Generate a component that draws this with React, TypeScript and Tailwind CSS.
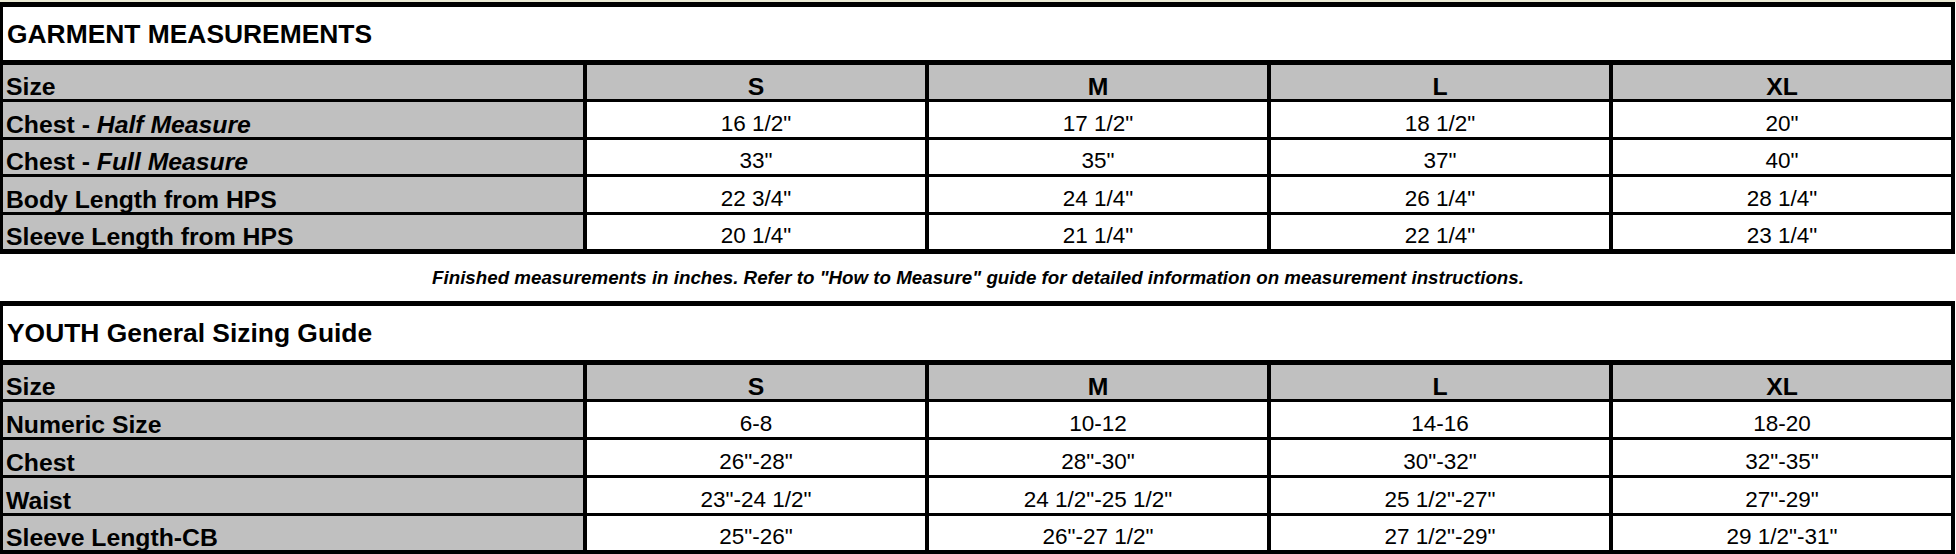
import React from 'react';

// --- DATA ---
type Row = { label: React.ReactNode; values: string[] };

const SIZES = ['S', 'M', 'L', 'XL'];

const GARMENT_ROWS: Row[] = [
  { label: <>Chest - <i>Half Measure</i></>, values: ['16 1/2"', '17 1/2"', '18 1/2"', '20"'] },
  { label: <>Chest - <i>Full Measure</i></>, values: ['33"', '35"', '37"', '40"'] },
  { label: 'Body Length from HPS', values: ['22 3/4"', '24 1/4"', '26 1/4"', '28 1/4"'] },
  { label: 'Sleeve Length from HPS', values: ['20 1/4"', '21 1/4"', '22 1/4"', '23 1/4"'] },
];

const YOUTH_ROWS: Row[] = [
  { label: 'Numeric Size', values: ['6-8', '10-12', '14-16', '18-20'] },
  { label: 'Chest', values: ['26"-28"', '28"-30"', '30"-32"', '32"-35"'] },
  { label: 'Waist', values: ['23"-24 1/2"', '24 1/2"-25 1/2"', '25 1/2"-27"', '27"-29"'] },
  { label: 'Sleeve Length-CB', values: ['25"-26"', '26"-27 1/2"', '27 1/2"-29"', '29 1/2"-31"'] },
];

// --- TABLE ---
const SizeTable = ({
  title,
  rows,
  titleClass,
  gridRows,
  bottomClass,
}: {
  title: string;
  rows: Row[];
  titleClass: string;
  gridRows: string;
  bottomClass: string;
}) => (
  <div className={`w-[1955px] border-black border-t-[5px] border-l-[3px] border-r-[4px] ${bottomClass}`}>
    <div className={`flex items-center pl-[4px] text-[26.4px] leading-[28px] font-bold bg-white border-b-[5px] border-black ${titleClass}`}>
      {title}
    </div>
    <div className={`grid grid-cols-[580px_repeat(4,338px)] gap-x-[4px] gap-y-[3px] bg-black ${gridRows}`}>
      <div className="bg-[#c0c0c0] flex items-end pl-[3px] text-[24.75px] leading-[24px] font-bold">
        <span>Size</span>
      </div>
      {SIZES.map((s) => (
        <div key={s} className="bg-[#c0c0c0] flex items-end justify-center text-[24.75px] leading-[24px] font-bold">
          <span>{s}</span>
        </div>
      ))}
      {rows.map((row, i) => (
        <React.Fragment key={i}>
          <div className="bg-[#c0c0c0] flex items-end pl-[3px] text-[24.75px] leading-[24px] font-bold whitespace-nowrap">
            <span>{row.label}</span>
          </div>
          {row.values.map((v, j) => (
            <div key={j} className="bg-white flex items-end justify-center pb-[2px] text-[22.5px] leading-[23px]">
              <span>{v}</span>
            </div>
          ))}
        </React.Fragment>
      ))}
    </div>
  </div>
);

const App = () => (
  <div className="w-[1956px] h-[554px] bg-white text-black overflow-hidden font-['Liberation_Sans',Arial,sans-serif]">
    <div className="h-[2px] bg-[#ebebd5]" />
    <SizeTable
      title="GARMENT MEASUREMENTS"
      rows={GARMENT_ROWS}
      titleClass="h-[58px]"
      gridRows="grid-rows-[34px_35px_34px_35px_34px]"
      bottomClass="border-b-[5px]"
    />
    <div className="h-[47px] flex items-center justify-center pt-[2px] text-[18.75px] italic font-bold">
      Finished measurements in inches. Refer to "How to Measure" guide for detailed information on measurement instructions.
    </div>
    <SizeTable
      title="YOUTH General Sizing Guide"
      rows={YOUTH_ROWS}
      titleClass="h-[59px]"
      gridRows="grid-rows-[34px_35px_35px_35px_34px]"
      bottomClass="border-b-[4px]"
    />
  </div>
);

export default App;
